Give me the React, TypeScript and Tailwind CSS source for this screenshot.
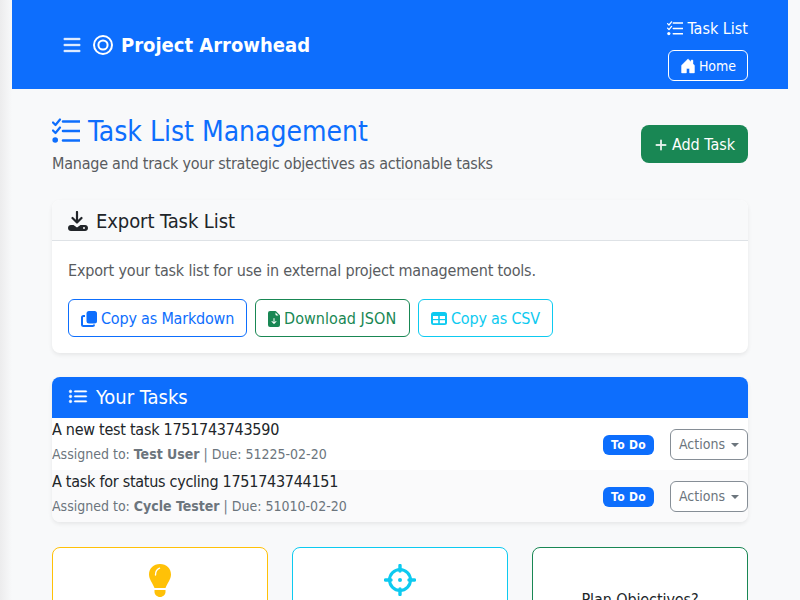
import { BsHouseDoorFill, BsPlusLg, BsList, BsListUl, BsFileEarmarkArrowDownFill } from "react-icons/bs"
import type { ReactNode } from "react"

const font = "font-['DejaVu_Sans_Condensed','DejaVu_Sans',sans-serif]"

function ChecklistIcon({ className }: { className: string }) {
  return (
    <svg viewBox="0 0 28 28" className={className} fill="none" stroke="currentColor">
      <path d="M11 3.5H27.5M11 13H27.5M11 22.5H27.5" strokeWidth="2.6" strokeLinecap="round" />
      <path d="M1 4.5L3.5 7L8 1.5M1 12.5L3.5 15L8 9.5" strokeWidth="2.2" strokeLinecap="round" strokeLinejoin="round" />
      <circle cx="3.2" cy="22" r="2.8" fill="currentColor" stroke="none" />
    </svg>
  )
}

function TargetIcon() {
  return (
    <svg viewBox="0 0 20 20" className="w-[20px] h-[20px] ml-[9px]" fill="none" stroke="currentColor" strokeWidth="2">
      <circle cx="10" cy="10" r="9" />
      <circle cx="10" cy="10" r="4.6" />
    </svg>
  )
}

function ExportIcon() {
  return (
    <svg viewBox="0 0 20 20" className="w-[20px] h-[20px]" fill="currentColor">
      <path d="M9 1V11M4.5 7L9 11.5L13.5 7" fill="none" stroke="currentColor" strokeWidth="2.2" strokeLinecap="round" strokeLinejoin="round" />
      <path d="M3 14H5.5L9 16.5L12.5 14H17C18.7 14 20 15.3 20 17C20 18.7 18.7 20 17 20H3C1.3 20 0 18.7 0 17C0 15.3 1.3 14 3 14Z" />
      <circle cx="16" cy="17" r="1" fill="#f8f9fa" />
    </svg>
  )
}

function CopyIcon() {
  return (
    <svg viewBox="0 0 16 16" className="w-[16px] h-[16px]" fill="currentColor">
      <rect x="5.5" y="0" width="10.5" height="12.5" rx="2.5" />
      <path d="M4 5H2.5A1.5 1.5 0 0 0 1 6.5V13.5A1.5 1.5 0 0 0 2.5 15H11.5A1.5 1.5 0 0 0 13 13.5" fill="none" stroke="currentColor" strokeWidth="2" />
    </svg>
  )
}

function TableIcon() {
  return (
    <svg viewBox="0 0 16 13" className="w-[16px] h-[13px]">
      <rect width="16" height="13" rx="2.5" fill="currentColor" />
      <rect x="2" y="4" width="5.2" height="3" fill="#ffffff" />
      <rect x="8.8" y="4" width="5.2" height="3" fill="#ffffff" />
      <rect x="2" y="8.2" width="5.2" height="3" fill="#ffffff" />
      <rect x="8.8" y="8.2" width="5.2" height="3" fill="#ffffff" />
    </svg>
  )
}

function BulbIcon() {
  return (
    <svg viewBox="0 0 22 33" className="w-[22px] h-[33px] text-[#ffc107]" fill="currentColor">
      <path d="M11 0C4.5 0 0 4.6 0 10.5C0 15.5 3.6 18.8 5.5 24H16.5C18.4 18.8 22 15.5 22 10.5C22 4.6 17.5 0 11 0Z" />
      <path d="M5.5 26H16.5V28C16.5 30.5 14 33 11 33C8 33 5.5 30.5 5.5 28Z" />
      <path d="M6.5 11C6.5 7.5 8 5.2 10.5 4.2" fill="none" stroke="#ffffff" strokeWidth="1.4" strokeLinecap="round" />
    </svg>
  )
}

function CrosshairIcon() {
  return (
    <svg viewBox="0 0 32 32" className="w-[32px] h-[32px] text-[#0dcaf0]" fill="none" stroke="currentColor">
      <circle cx="16" cy="16" r="10.5" strokeWidth="3" />
      <path d="M16 1.5V7M16 25V30.5M1.5 16H7M25 16H30.5" strokeWidth="3.4" strokeLinecap="round" />
      <circle cx="16" cy="16" r="2" fill="currentColor" stroke="none" />
    </svg>
  )
}

function TaskRow({ title, who, due, shaded }: { title: string; who: string; due: string; shaded?: boolean }) {
  return (
    <div className={`flex justify-between h-[52px] ${shaded ? "bg-[#fafafb]" : "bg-white"}`}>
      <div>
        <div className="text-[16px] leading-[24px] text-[#212529] tracking-[-0.27px]">{title}</div>
        <div className="text-[14px] leading-[21px] mt-[2px] text-[#6c757d]">
          Assigned to: <b className="font-bold">{who}</b> | Due: {due}
        </div>
      </div>
      <div className="flex items-center gap-[16px] pt-[1px]">
        <span className="bg-[#0d6efd] text-white text-[12px] font-bold leading-[20px] h-[20px] w-[51px] text-center rounded-[6px] tracking-[0.3px]">To Do</span>
        <button className="border border-[#868e96] rounded-[6px] text-[#6c757d] text-[14px] leading-[21px] px-[8px] h-[31px] w-[78px] flex items-center justify-between bg-white">
          Actions
          <span className="w-0 h-0 border-x-[4px] border-x-transparent border-t-[4px] border-t-[#6c757d]" />
        </button>
      </div>
    </div>
  )
}

function ExportButton({ color, children }: { color: string; children: ReactNode }) {
  return (
    <button className={`border rounded-[6px] h-[38px] pt-[1px] flex items-center text-[16px] ${color}`}>
      {children}
    </button>
  )
}

export default function App() {
  return (
    <div className={`h-[600px] overflow-hidden bg-[#f8f9fa] ${font} flex`}>
      <div className="w-[12px] bg-gradient-to-r from-[#ececed] to-[#f8f9fa]" />
      <div className="w-[776px]">
        <header className="bg-[#0d6efd] h-[89px] flex items-start justify-between pl-[48px] pr-[40px] text-white">
          <div className="flex items-center h-[89px]">
            <BsList className="w-[24px] h-[24px]" stroke="currentColor" strokeWidth={0.4} />
            <TargetIcon />
            <span className="text-[20px] font-bold ml-[8px]">Project Arrowhead</span>
          </div>
          <div className="flex flex-col items-end gap-[9px] pt-[17px]">
            <div className="flex items-center gap-[4px] text-[16px] leading-[24px]"><ChecklistIcon className="w-[16px] h-[16px]" />Task List</div>
            <button className="border border-white rounded-[6px] h-[31px] w-[80px] pt-[1px] text-[14px] flex items-center justify-center gap-[3px]"><BsHouseDoorFill className="w-[16px] h-[16px]" stroke="currentColor" strokeWidth={0.4} />Home</button>
          </div>
        </header>
        <main className="px-[40px]">
          <div className="flex items-start justify-between pt-[25px]">
            <div>
              <h1 className="text-[#0d6efd] text-[28px] leading-[36px] flex items-center gap-[8px]"><ChecklistIcon className="w-[28px] h-[28px]" />Task List Management</h1>
              <p className="text-[#595c5f] text-[16px] leading-[24px] mt-[2px] tracking-[-0.24px]">Manage and track your strategic objectives as actionable tasks</p>
            </div>
            <button className="mt-[11px] bg-[#198754] text-white rounded-[8px] h-[38px] w-[107px] pt-[1px] flex items-center justify-center gap-[4px] text-[16px]"><BsPlusLg className="w-[14px] h-[14px]" stroke="currentColor" strokeWidth={0.8} />Add Task</button>
          </div>
          <section className="mt-[24px] bg-white rounded-[8px] shadow-[0_2px_4px_rgba(0,0,0,0.075)] overflow-hidden">
            <div className="h-[41px] bg-[#f8f9fa] border-b border-[#dee2e6] px-[16px] pt-[1px] flex items-center gap-[8px] text-[20px] tracking-[-0.08px] text-[#212529]"><ExportIcon />Export Task List</div>
            <div className="px-[16px] pt-[18px] pb-[16px]">
              <p className="text-[#595c5f] text-[16px] leading-[24px] tracking-[-0.18px]">Export your task list for use in external project management tools.</p>
              <div className="flex gap-[8px] mt-[16px]">
                <ExportButton color="w-[179px] pl-[12px] gap-[4px] tracking-[-0.2px] border-[#0d6efd] text-[#0d6efd]"><CopyIcon />Copy as Markdown</ExportButton>
                <ExportButton color="w-[155px] pl-[10px] gap-[2px] tracking-[0.05px] border-[#198754] text-[#198754]"><BsFileEarmarkArrowDownFill className="w-[16px] h-[16px]" />Download JSON</ExportButton>
                <ExportButton color="w-[135px] pl-[12px] gap-[4px] tracking-[-0.2px] border-[#0dcaf0] text-[#0dcaf0]"><TableIcon />Copy as CSV</ExportButton>
              </div>
            </div>
          </section>
          <section className="mt-[24px] rounded-[8px] shadow-[0_2px_4px_rgba(0,0,0,0.075)] overflow-hidden">
            <div className="h-[41px] bg-[#0d6efd] text-white px-[16px] pb-[1px] flex items-center gap-[8px] text-[20px]"><BsListUl className="w-[20px] h-[20px]" stroke="currentColor" strokeWidth={0.5} />Your Tasks</div>
            <TaskRow title="A new test task 1751743743590" who="Test User" due="51225-02-20" />
            <TaskRow title="A task for status cycling 1751743744151" who="Cycle Tester" due="51010-02-20" shaded />
          </section>
          <div className="grid grid-cols-3 gap-[24px] mt-[25px]">
            <div className="h-[120px] bg-white border border-[#ffc107] rounded-[8px] flex justify-center pt-[16px]"><BulbIcon /></div>
            <div className="h-[120px] bg-white border border-[#0dcaf0] rounded-[8px] flex justify-center pt-[16px]"><CrosshairIcon /></div>
            <div className="h-[120px] bg-white border border-[#198754] rounded-[8px] text-center pt-[40px] text-[16px] tracking-[-0.1px] text-[#212529]">Plan Objectives?</div>
          </div>
        </main>
      </div>
    </div>
  )
}
